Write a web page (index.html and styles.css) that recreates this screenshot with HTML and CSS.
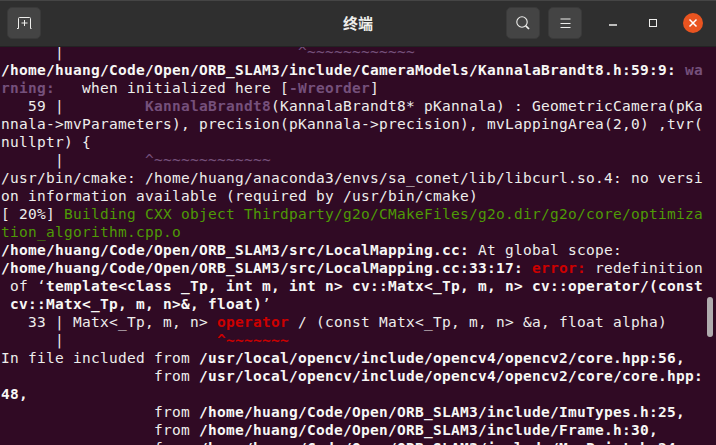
FILE: index.html
```html
<!DOCTYPE html>
<html lang="zh">
<head>
<meta charset="utf-8">
<title>终端</title>
<link rel="stylesheet" href="styles.css">
</head>
<body>
<div class="window">
  <header class="titlebar">
    <button class="btn new-tab" aria-label="new tab">
      <svg width="15" height="12" viewBox="0 0 15 12" fill="none" stroke="#eeeeec" stroke-width="1"><path d="M0 11.500h1.500V1.500a1 1 0 0 1 1-1h10a1 1 0 0 1 1 1v10h1"/><path d="M7.500 3v6M4.500 6h6"/></svg>
    </button>
    <div class="title">终端</div>
    <div class="actions">
      <button class="btn" aria-label="search">
        <svg width="14" height="14" viewBox="0 0 14 14" fill="none" stroke="#eeeeec"><circle cx="6" cy="6" r="5.200" stroke-width="1.100"/><path d="M9.800 9.800l3.200 3.200" stroke-width="1.700"/></svg>
      </button>
      <button class="btn" aria-label="menu">
        <svg width="11" height="11" viewBox="0 0 11 11" stroke="#eeeeec" stroke-width="1"><path d="M0.500 1h10M0.500 5.500h10M0.500 9.500h10"/></svg>
      </button>
      <div class="winctl">
        <svg width="10" height="10" viewBox="0 0 10 10" fill="none" stroke="#eeeeec" stroke-width="1.500"><path d="M1 7h8"/></svg>
        <svg width="10" height="10" viewBox="0 0 10 10" fill="none" stroke="#eeeeec" stroke-width="1"><rect x="1.500" y="1.500" width="7" height="7"/></svg>
        <span class="close"><svg width="10" height="10" viewBox="0 0 10 10" stroke="#fff" stroke-width="1.500"><path d="M1.500 1.500l7 7M8.500 1.500l-7 7"/></svg></span>
      </div>
    </div>
  </header>
  <main class="term">
    <div class="scrollthumb"></div>
    <div class="lines">
<div class="l">      |                          <span class="m">^~~~~~~~~~~~~</span></div>
<div class="l"><b>/home/huang/Code/Open/ORB_SLAM3/include/CameraModels/KannalaBrandt8.h:59:9: </b><b class="m">wa</b></div>
<div class="l"><b class="m">rning: </b>  when initialized here [<b class="m">-Wreorder</b>]</div>
<div class="l">   59 |         <b class="m">KannalaBrandt8</b>(KannalaBrandt8* pKannala) : GeometricCamera(pKa</div>
<div class="l">nnala-&gt;mvParameters), precision(pKannala-&gt;precision), mvLappingArea(2,0) ,tvr(</div>
<div class="l">nullptr) {</div>
<div class="l">      |         <span class="m">^~~~~~~~~~~~~~</span></div>
<div class="l">/usr/bin/cmake: /home/huang/anaconda3/envs/sa_conet/lib/libcurl.so.4: no versi</div>
<div class="l">on information available (required by /usr/bin/cmake)</div>
<div class="l">[ 20%] <span class="g">Building CXX object Thirdparty/g2o/CMakeFiles/g2o.dir/g2o/core/optimiza</span></div>
<div class="l"><span class="g">tion_algorithm.cpp.o</span></div>
<div class="l"><b>/home/huang/Code/Open/ORB_SLAM3/src/LocalMapping.cc:</b> At global scope:</div>
<div class="l"><b>/home/huang/Code/Open/ORB_SLAM3/src/LocalMapping.cc:33:17: </b><b class="r">error: </b>redefinition</div>
<div class="l"> of ‘<b>template&lt;class _Tp, int m, int n&gt; cv::Matx&lt;_Tp, m, n&gt; cv::operator/(const</b></div>
<div class="l"><b> cv::Matx&lt;_Tp, m, n&gt;&amp;, float)</b>’</div>
<div class="l">   33 | Matx&lt;_Tp, m, n&gt; <b class="r">operator</b> / (const Matx&lt;_Tp, m, n&gt; &amp;a, float alpha)</div>
<div class="l">      |                 <b class="r">^~~~~~~~</b></div>
<div class="l">In file included from <b>/usr/local/opencv/include/opencv4/opencv2/core.hpp:56,</b></div>
<div class="l">                 from <b>/usr/local/opencv/include/opencv4/opencv2/core/core.hpp:</b></div>
<div class="l"><b>48,</b></div>
<div class="l">                 from <b>/home/huang/Code/Open/ORB_SLAM3/include/ImuTypes.h:25,</b></div>
<div class="l">                 from <b>/home/huang/Code/Open/ORB_SLAM3/include/Frame.h:30,</b></div>
<div class="l">                 from <b>/home/huang/Code/Open/ORB_SLAM3/include/MapPoint.h:24,</b></div>
    </div>
  </main>
</div>
</body>
</html>
```
FILE: styles.css
```css
* { box-sizing: border-box; }
html, body { margin: 0; height: 100%; background: #300a24; overflow: hidden; }
.window { width: 716px; height: 445px; display: flex; flex-direction: column; }
.titlebar {
  height: 47px; flex: none; position: relative;
  display: flex; align-items: center; justify-content: space-between;
  padding: 0 13px 1px 7px;
  background: #2f2f2f; border-top: 1px solid #454545; border-bottom: 1px solid #232323;
}
.btn {
  width: 34px; height: 32px; padding: 0; display: flex; align-items: center; justify-content: center;
  background: #444444; border: 1px solid #3a3a3a; border-radius: 5px;
}
.title {
  position: absolute; left: 0; right: 0; text-align: center; top: 12px;
  font: bold 15px/20px "Noto Sans CJK SC", sans-serif; color: #eeeeec; pointer-events: none;
}
.actions { display: flex; align-items: center; gap: 8px; }
.winctl { display: flex; align-items: center; gap: 30px; margin-left: 18px; }
.close { width: 20px; height: 20px; border-radius: 50%; background: #e95420; display: flex; align-items: center; justify-content: center; margin-left: -5px; }
.term {
  flex: 1; position: relative; overflow: hidden; padding: 0 0 0 1px;
  background: #300a24; color: #eeeeec;
  font: 14.500px/18px "DejaVu Sans Mono", monospace;
}
.lines { margin-top: -4px; }
.l { height: 18px; white-space: pre; letter-spacing: 0.270px; }
.l b { font-weight: bold; color: #f7f7f5; }
.l .m, .l b.m { color: #75507b; }
.l .g { color: #4e9a06; }
.l .r, .l b.r { color: #cc0000; }
.scrollthumb { position: absolute; right: 3px; top: 250px; width: 6px; height: 40px; border-radius: 3px; background: #b0acae; }
```
